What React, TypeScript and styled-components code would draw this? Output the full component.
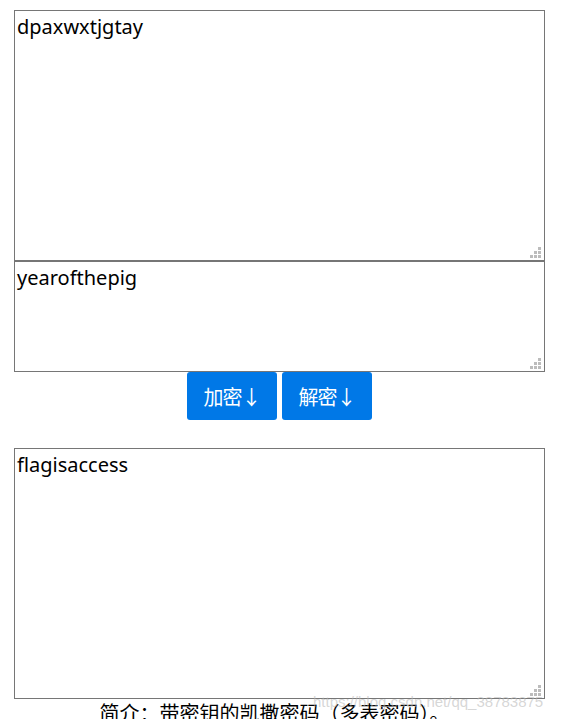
import styled, { createGlobalStyle } from "styled-components";

const Global = createGlobalStyle`
  html, body { margin: 0; padding: 0; background: #fff; overflow: hidden; }
  body { font-family: "Noto Sans", "Noto Sans CJK SC", sans-serif; }
`;

const Page = styled.div`
  position: relative;
  width: 565px;
  height: 719px;
  padding: 10px 0 0 14px;
  box-sizing: border-box;
  overflow: hidden;
`;

const Column = styled.div`
  width: 531px;
  display: flex;
  flex-direction: column;
`;

const Field = styled.div`
  position: relative;
  width: 531px;
`;

const Area = styled.textarea<{ h: number }>`
  display: block;
  box-sizing: border-box;
  width: 531px;
  height: ${p => p.h}px;
  margin: 0;
  padding: 2px;
  border: 1px solid #767676;
  font-family: "Noto Sans", "Noto Sans CJK SC", sans-serif;
  font-size: 20px;
  line-height: 27px;
  color: #000;
  background: #fff;
  resize: none;
  outline: none;
`;

/* windows style dotted resize grip */
const Grip = styled.span`
  position: absolute;
  right: 4px;
  bottom: 3px;
  width: 3px;
  height: 3px;
  background: #bcbcbc;
  box-shadow:
    -4px 0 0 #bcbcbc, -8px 0 0 #bcbcbc,
    0 -4px 0 #bcbcbc, -4px -4px 0 #bcbcbc,
    0 -8px 0 #bcbcbc;
  pointer-events: none;
`;

const Buttons = styled.div`
  display: flex;
  justify-content: center;
  gap: 5px;
  margin-bottom: 28px;
`;

const Btn = styled.button`
  width: 90px;
  height: 48px;
  border: none;
  border-radius: 3px;
  background: #0078e7;
  color: #fff;
  font-family: "Noto Sans CJK SC", sans-serif;
  font-size: 20px;
  letter-spacing: -1px;
  padding: 0;
  cursor: pointer;
`;

const Intro = styled.p`
  margin: 0;
  text-align: center;
  font-family: "Noto Sans CJK SC", sans-serif;
  font-size: 20px;
  line-height: 28px;
  color: #000;
  padding-right: 10px;
`;

const Watermark = styled.span`
  position: absolute;
  left: 313px;
  top: 693px;
  font-family: "Liberation Sans", Arial, sans-serif;
  font-size: 15px;
  color: rgba(180, 180, 180, 0.55);
  white-space: nowrap;
  pointer-events: none;
`;

function Box({ h, value }: { h: number; value: string }) {
  return (
    <Field>
      <Area h={h} defaultValue={value} />
      <Grip />
    </Field>
  );
}

export default function App() {
  return (
    <>
      <Global />
      <Page>
        <Column>
          <Box h={251} value="dpaxwxtjgtay" />
          <Box h={111} value="yearofthepig" />
          <Buttons>
            <Btn>加密↓</Btn>
            <Btn>解密↓</Btn>
          </Buttons>
          <Box h={251} value="flagisaccess" />
          <Intro>简介：带密钥的凯撒密码（多表密码）。</Intro>
        </Column>
        <Watermark>https://blog.csdn.net/qq_38783875</Watermark>
      </Page>
    </>
  );
}
